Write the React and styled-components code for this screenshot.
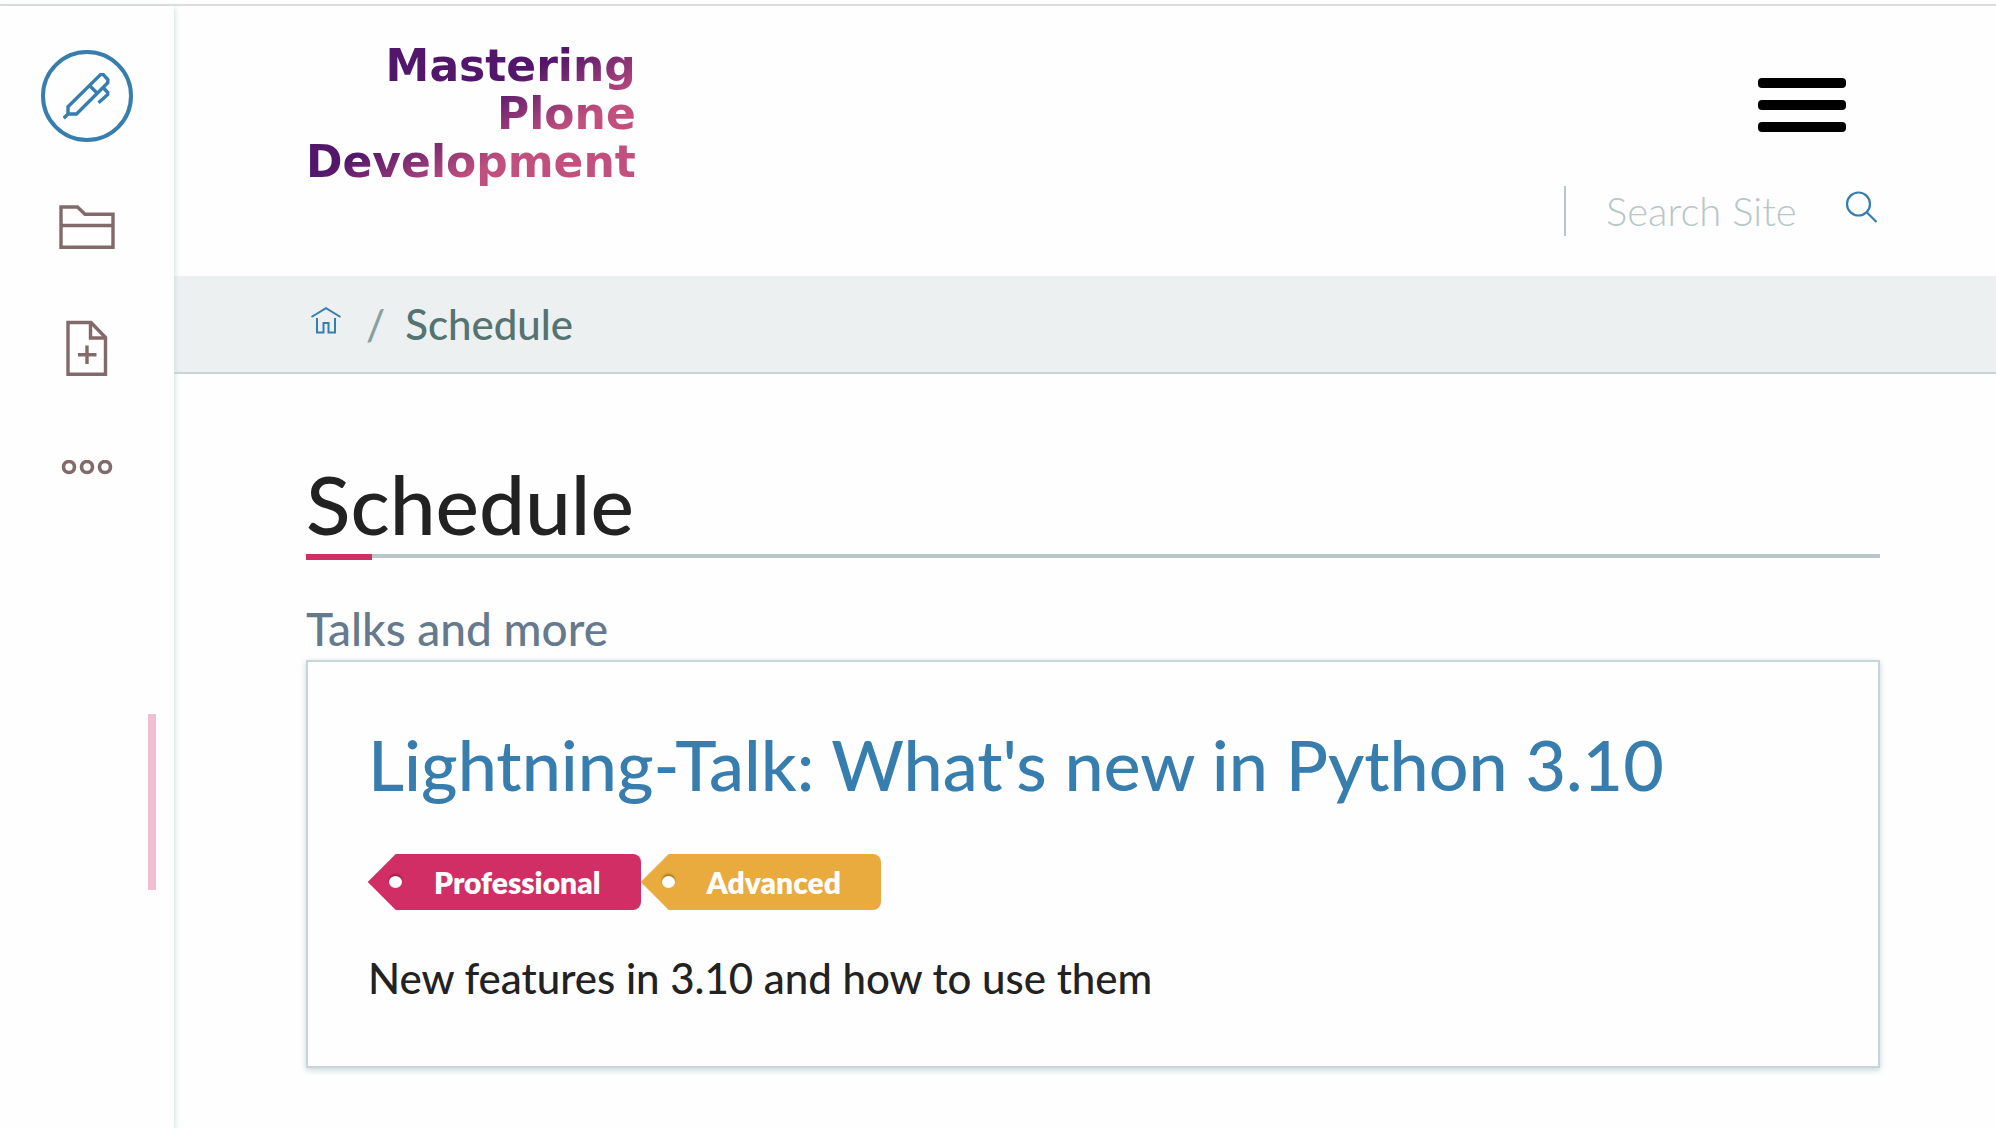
import React from 'react';
import styled, { createGlobalStyle } from 'styled-components';

const colors = {
  link: '#377dad',
  tool: '#826a6a',
  ink: '#222222',
  line: '#c7d5d8',
  rule: '#b8c6c8',
  pink: '#d12e65',
  amber: '#eaab3e',
};

const GlobalStyle = createGlobalStyle`
  *, *::before, *::after { box-sizing: border-box; }
  body {
    margin: 0;
    background: #fefefe;
    color: ${colors.ink};
    font-family: Lato, "Open Sans", sans-serif;
    font-size: 42px;
    font-weight: 500;
  }
  h1, h2, p, ol { margin: 0; padding: 0; font-weight: 500; }
  a { color: ${colors.link}; text-decoration: none; }
  button { margin: 0; padding: 0; border: 0; background: none; cursor: pointer; }
  svg { display: block; fill: none; }
`;

const Page = styled.div`
  display: flex;
  flex-direction: column;
  min-height: 100vh;
`;

const TopRule = styled.div`
  height: 6px;
  border-bottom: 2px solid #dcdcdc;
`;

const Columns = styled.div`
  display: flex;
  flex: 1;
`;

const Toolbar = styled.nav`
  display: flex;
  flex-direction: column;
  align-items: center;
  flex: none;
  width: 174px;
  padding-top: 44px;
  box-shadow: 0 2px 6px ${colors.line};
  z-index: 1;
`;

const EditButton = styled.button`
  display: grid;
  place-items: center;
  width: 92px;
  height: 92px;
  margin-bottom: 50px;
  border: 4px solid ${colors.link};
  border-radius: 50%;
  color: ${colors.link};
`;

const ToolButton = styled.button`
  display: grid;
  place-items: center;
  width: 72px;
  height: 72px;
  margin-bottom: 48px;
  color: ${colors.tool};
`;

const Handle = styled.button`
  align-self: flex-end;
  width: 8px;
  height: 176px;
  margin: 162px 18px 0 0;
  background: #f2bfd2;
`;

const Content = styled.div`
  flex: 1;
  min-width: 0;
`;

const Header = styled.header`
  display: flex;
  justify-content: space-between;
  height: 270px;
  padding: 36px 116px 0 132px;
`;

const Logo = styled.a`
  align-self: flex-start;
  font: 700 44px/48px "DejaVu Sans", Inter, sans-serif;
  text-align: right;
  color: transparent;
  background: linear-gradient(154deg, #52166b 45%, #c2507f 70%);
  background-clip: text;
  -webkit-background-clip: text;

  span { display: block; }
`;

const HeaderTools = styled.div`
  display: flex;
  flex-direction: column;
  align-items: flex-end;
`;

const MenuButton = styled.button`
  display: flex;
  flex-direction: column;
  gap: 12px;
  width: 88px;
  margin: 36px 34px 54px 0;

  span {
    width: 100%;
    height: 10px;
    border-radius: 4px;
    background: #000;
  }
`;

const SearchForm = styled.form`
  display: flex;
  height: 50px;
  padding-left: 40px;
  border-left: 2px solid ${colors.rule};
`;

const SearchInput = styled.input`
  width: 236px;
  padding: 0;
  border: 0;
  outline: 0;
  background: none;
  color: ${colors.ink};
  font: 300 40px/50px Lato, "Open Sans", sans-serif;

  &::placeholder { color: ${colors.rule}; opacity: 1; }
`;

const SearchButton = styled.button`
  width: 36px;
  height: 36px;
  margin: 2px 2px 0 0;
  color: ${colors.link};
`;

const Breadcrumbs = styled.nav`
  padding: 0 116px 0 132px;
  background: #ecf0f1;
  border-bottom: 2px solid ${colors.line};

  ol {
    display: flex;
    align-items: center;
    list-style: none;
    line-height: 96px;
    color: #557371;
  }
`;

const HomeLink = styled.a`
  display: block;
  padding: 0 4px 6px;
`;

const Slash = styled.span`
  padding: 0 20px;
  color: #8aa0a0;
`;

const Main = styled.main`
  padding: 78px 116px 60px 132px;
`;

const Title = styled.h1`
  font-size: 82px;
  line-height: 102px;
`;

const TitleRule = styled.div`
  height: 4px;
  margin-bottom: 40px;
  background: ${colors.rule};

  &::before {
    content: '';
    display: block;
    width: 66px;
    height: 6px;
    background: ${colors.pink};
  }
`;

const Description = styled.p`
  font-size: 46px;
  line-height: 62px;
  color: #657a8d;
`;

const Card = styled.article`
  padding: 60px;
  border: 2px solid ${colors.line};
  box-shadow: 0 2px 6px ${colors.line};
`;

const CardTitle = styled.h2`
  margin-bottom: 48px;
  font-size: 70px;
  line-height: 84px;
`;

const Tags = styled.div`
  display: flex;
  margin-bottom: 40px;
`;

const Tag = styled.span`
  position: relative;
  height: 56px;
  margin-left: 28px;
  padding: 0 40px 0 38px;
  border-radius: 0 8px 8px 0;
  background: ${(p) => p.$color};
  color: #fff;
  font-size: 30px;
  font-weight: 800;
  line-height: 56px;

  &::before {
    content: '';
    position: absolute;
    top: 8px;
    left: -20px;
    width: 40px;
    height: 40px;
    background: inherit;
    transform: rotate(45deg);
  }

  &::after {
    content: '';
    position: absolute;
    top: 22px;
    left: -7px;
    width: 13px;
    height: 12px;
    border-radius: 50%;
    background: #fff;
    box-shadow: 0 -2px 2px rgba(0, 0, 0, 0.3);
  }
`;

const Summary = styled.p`
  line-height: 56px;
`;

const PenIcon = () => (
  <svg width="48" height="48" viewBox="0 0 48 48" stroke="currentColor" strokeWidth="3.4">
    <path d="M0.700 46.200 L5 42 H13.500 L44.800 10.700 V7.500 L40.300 2.600 H37.500 L5 34.800 V42" />
    <path d="M26.500 13.500 L34.500 21.500" />
    <path d="M40.500 16 L44.700 20.500 V22.500 L35.500 30.800" />
  </svg>
);

const FolderIcon = () => (
  <svg width="56" height="46" viewBox="0 0 56 46" stroke="currentColor" strokeWidth="3.4">
    <path d="M2 2 H18.500 L26 9.200 H54 V42.300 H2 Z M2 20.500 H54" />
  </svg>
);

const AddIcon = () => (
  <svg width="42" height="56" viewBox="0 -1 42 56" stroke="currentColor" strokeWidth="3.400">
    <path d="M2 1.500 H25 L39.500 16.500 V53.200 H2 Z" />
    <path d="M24.500 2 V17 H39.500 M12 33.700 H30.500 M21 24.500 V43" />
  </svg>
);

const MoreIcon = () => (
  <svg width="52" height="16" viewBox="0 1 52 16" stroke="currentColor" strokeWidth="3.600">
    <circle cx="8" cy="8" r="5.500" />
    <circle cx="26" cy="8" r="5.500" />
    <circle cx="44" cy="8" r="5.500" />
  </svg>
);

const SearchIcon = () => (
  <svg width="36" height="36" viewBox="0 0 36 36" stroke="currentColor" strokeWidth="2.200">
    <circle cx="16.500" cy="16" r="11.500" />
    <path d="M24.500 24 L34.500 34" />
  </svg>
);

const HomeIcon = () => (
  <svg width="32" height="30" viewBox="0 0 32 30" stroke="currentColor" strokeWidth="2">
    <path d="M1.500 11 L16 2.200 L30.500 11" />
    <path d="M7 12 V26.500 H13.500 V17 H18.500 V26.500 H25 V12" />
  </svg>
);

export default function App() {
  return (
    <Page>
      <GlobalStyle />
      <TopRule />
      <Columns>
        <Toolbar aria-label="Toolbar">
          <EditButton type="button" aria-label="Edit"><PenIcon /></EditButton>
          <ToolButton type="button" aria-label="Contents"><FolderIcon /></ToolButton>
          <ToolButton type="button" aria-label="Add"><AddIcon /></ToolButton>
          <ToolButton type="button" aria-label="More"><MoreIcon /></ToolButton>
          <Handle type="button" aria-label="Collapse toolbar" />
        </Toolbar>
        <Content>
          <Header>
            <Logo href="#home">
              <span>Mastering</span>
              <span>Plone</span>
              <span>Development</span>
            </Logo>
            <HeaderTools>
              <MenuButton type="button" aria-label="Menu">
                <span />
                <span />
                <span />
              </MenuButton>
              <SearchForm role="search">
                <SearchInput type="text" aria-label="Search Site" placeholder="Search Site" />
                <SearchButton type="submit" aria-label="Search"><SearchIcon /></SearchButton>
              </SearchForm>
            </HeaderTools>
          </Header>
          <Breadcrumbs aria-label="Breadcrumbs">
            <ol>
              <li><HomeLink href="#home" aria-label="Home"><HomeIcon /></HomeLink></li>
              <li><Slash>/</Slash></li>
              <li>Schedule</li>
            </ol>
          </Breadcrumbs>
          <Main>
            <Title>Schedule</Title>
            <TitleRule />
            <Description>Talks and more</Description>
            <Card>
              <CardTitle><a href="#talk">Lightning-Talk: What's new in Python 3.10</a></CardTitle>
              <Tags>
                <Tag $color={colors.pink}>Professional</Tag>
                <Tag $color={colors.amber}>Advanced</Tag>
              </Tags>
              <Summary>New features in 3.10 and how to use them</Summary>
            </Card>
          </Main>
        </Content>
      </Columns>
    </Page>
  );
}
